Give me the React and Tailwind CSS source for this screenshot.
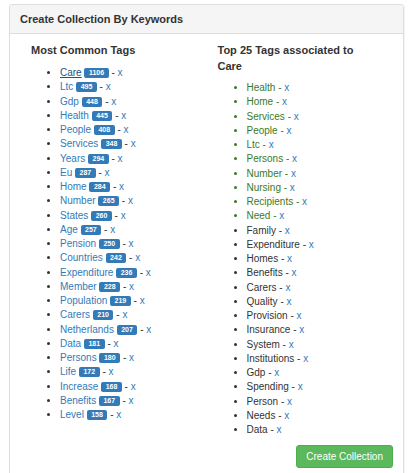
import React from "react";

const common = [
  ["Care", 1106],
  ["Ltc", 495],
  ["Gdp", 448],
  ["Health", 445],
  ["People", 408],
  ["Services", 348],
  ["Years", 294],
  ["Eu", 287],
  ["Home", 284],
  ["Number", 265],
  ["States", 260],
  ["Age", 257],
  ["Pension", 250],
  ["Countries", 242],
  ["Expenditure", 236],
  ["Member", 228],
  ["Population", 219],
  ["Carers", 210],
  ["Netherlands", 207],
  ["Data", 181],
  ["Persons", 180],
  ["Life", 172],
  ["Increase", 168],
  ["Benefits", 167],
  ["Level", 158],
];

const top = [
  ["Health", true],
  ["Home", true],
  ["Services", true],
  ["People", true],
  ["Ltc", true],
  ["Persons", true],
  ["Number", true],
  ["Nursing", true],
  ["Recipients", true],
  ["Need", true],
  ["Family", false],
  ["Expenditure", false],
  ["Homes", false],
  ["Benefits", false],
  ["Carers", false],
  ["Quality", false],
  ["Provision", false],
  ["Insurance", false],
  ["System", false],
  ["Institutions", false],
  ["Gdp", false],
  ["Spending", false],
  ["Person", false],
  ["Needs", false],
  ["Data", false],
];

export default function App() {
  return (
    <div
      className="w-[416px] h-[473px] overflow-hidden bg-white pl-[9px] pt-[4px] text-[#333]"
      style={{ fontFamily: '"Liberation Sans", Arial, sans-serif' }}
    >
      <div className="w-[395px] border border-[#ddd] rounded-[3px] shadow-[1px_1px_2px_rgba(0,0,0,0.05)]">
        <div className="h-[29px] bg-[#f5f5f5] border-b border-[#ddd] flex items-center pl-[10px] text-[11px] font-bold text-[#333] rounded-t-[3px]">
          Create Collection By Keywords
        </div>
        <div className="px-[10px] pt-[8px] pb-[12px]">
          <div className="grid grid-cols-2">
            <div className="px-[11px]">
              <h4 className="text-[11px] font-bold leading-[16px] text-[#333]">
                Most Common Tags
              </h4>
              <ul className="list-disc pl-[29px] mt-[8px] text-[10px] leading-[14.25px]">
                {common.map(([name, n], i) => (
                  <li key={name}>
                    <a
                      className={
                        i === 0
                          ? "text-[#23527c] underline"
                          : "text-[#337ab7]"
                      }
                    >
                      {name}
                    </a>{" "}
                    <span className="inline-block align-[1px] bg-[#337ab7] text-white font-bold text-[7px] leading-[10px] h-[10px] px-[4.5px] rounded-[2px]">
                      {n}
                    </span>{" "}
                    - <a className="text-[#337ab7]">x</a>
                  </li>
                ))}
              </ul>
            </div>
            <div className="px-[11px]">
              <h4 className="text-[11px] font-bold leading-[16px] text-[#333]">
                Top 25 Tags associated to
                <br />
                Care
              </h4>
              <ul className="list-disc pl-[29px] mt-[7px] text-[10px] leading-[14.25px]">
                {top.map(([name, green]) => (
                  <li
                    key={name}
                    className={green ? "text-[#3b7a1d]" : "text-[#333]"}
                  >
                    {name} - <a className="text-[#337ab7]">x</a>
                  </li>
                ))}
              </ul>
            </div>
          </div>
          <div className="flex justify-end mt-[8px]">
            <button className="h-[23px] px-[9px] bg-[#5cb85c] border border-[#4cae4c] rounded-[3px] text-white text-[10px] leading-none">
              Create Collection
            </button>
          </div>
        </div>
      </div>
    </div>
  );
}
